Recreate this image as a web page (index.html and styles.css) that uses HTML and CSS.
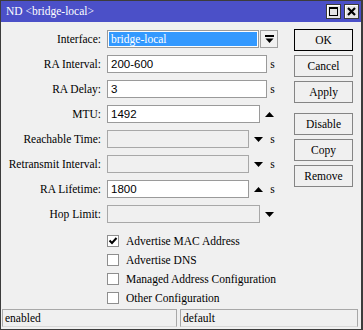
FILE: index.html
```html
<!DOCTYPE html>
<html>
<head>
<meta charset="utf-8">
<link rel="stylesheet" href="styles.css">
</head>
<body>
<div class="window">
  <div class="titlebar">
    <span class="title">ND &lt;bridge-local&gt;</span>
    <div class="tb-buttons">
      <span class="tbtn"><svg width="13" height="13" viewBox="0 0 13 13"><rect x="2.5" y="2.5" width="8" height="8" fill="none" stroke="#000" stroke-width="1"/><rect x="2" y="2" width="9" height="2" fill="#000"/></svg></span>
      <span class="tbtn"><svg width="13" height="13" viewBox="0 0 13 13"><path d="M3 3 L10 10 M10 3 L3 10" stroke="#000" stroke-width="2.2"/></svg></span>
    </div>
  </div>
  <div class="body">
    <div class="form">
      <div class="row">
        <label class="lbl">Interface:</label>
        <div class="ctrl">
          <div class="input sel"><span class="selected">bridge-local</span></div>
          <span class="ddbtn"><svg width="9" height="9" viewBox="0 0 9 9"><rect x="0" y="0" width="9" height="2" fill="#000"/><polygon points="0.5,3.5 8.5,3.5 4.5,8" fill="#000"/></svg></span>
        </div>
      </div>
      <div class="row">
        <label class="lbl">RA Interval:</label>
        <div class="ctrl">
          <div class="input"><span class="num">200-600</span></div>
          <span class="unit">s</span>
        </div>
      </div>
      <div class="row">
        <label class="lbl">RA Delay:</label>
        <div class="ctrl">
          <div class="input"><span class="num">3</span></div>
          <span class="unit">s</span>
        </div>
      </div>
      <div class="row">
        <label class="lbl">MTU:</label>
        <div class="ctrl">
          <div class="input"><span class="num">1492</span></div>
          <span class="arrow"><svg width="9" height="5" viewBox="0 0 9 5"><polygon points="0,5 9,5 4.5,0" fill="#000"/></svg></span>
        </div>
      </div>
      <div class="row">
        <label class="lbl">Reachable Time:</label>
        <div class="ctrl">
          <div class="input off"></div>
          <span class="arrow"><svg width="9" height="5" viewBox="0 0 9 5"><polygon points="0,0 9,0 4.5,5" fill="#000"/></svg></span>
          <span class="unit">s</span>
        </div>
      </div>
      <div class="row">
        <label class="lbl">Retransmit Interval:</label>
        <div class="ctrl">
          <div class="input off"></div>
          <span class="arrow"><svg width="9" height="5" viewBox="0 0 9 5"><polygon points="0,0 9,0 4.5,5" fill="#000"/></svg></span>
          <span class="unit">s</span>
        </div>
      </div>
      <div class="row">
        <label class="lbl">RA Lifetime:</label>
        <div class="ctrl">
          <div class="input"><span class="num">1800</span></div>
          <span class="arrow"><svg width="9" height="5" viewBox="0 0 9 5"><polygon points="0,5 9,5 4.5,0" fill="#000"/></svg></span>
          <span class="unit">s</span>
        </div>
      </div>
      <div class="row">
        <label class="lbl">Hop Limit:</label>
        <div class="ctrl">
          <div class="input off"></div>
          <span class="arrow"><svg width="9" height="5" viewBox="0 0 9 5"><polygon points="0,0 9,0 4.5,5" fill="#000"/></svg></span>
        </div>
      </div>
      <div class="checks">
        <div class="check"><span class="box"><svg width="10" height="10" viewBox="0 0 10 10"><polyline points="1.5,4.5 4,7 8.5,2" fill="none" stroke="#000" stroke-width="2"/></svg></span><span class="ctext">Advertise MAC Address</span></div>
        <div class="check"><span class="box"></span><span class="ctext">Advertise DNS</span></div>
        <div class="check"><span class="box"></span><span class="ctext">Managed Address Configuration</span></div>
        <div class="check"><span class="box"></span><span class="ctext">Other Configuration</span></div>
      </div>
    </div>
    <div class="buttons">
      <div class="btn default">OK</div>
      <div class="btn">Cancel</div>
      <div class="btn">Apply</div>
      <div class="btn group">Disable</div>
      <div class="btn">Copy</div>
      <div class="btn">Remove</div>
    </div>
  </div>
  <div class="status">
    <div class="sfield">enabled</div>
    <div class="sfield">default</div>
  </div>
</div>
</body>
</html>
```
FILE: styles.css
```css
* { box-sizing: border-box; }
html, body { margin: 0; padding: 0; background: #ffffff; }
body {
  font-family: "Liberation Serif", "Times New Roman", serif;
  font-size: 11.5px;
  color: #000;
}
.window {
  width: 363px;
  height: 330px;
  background: #f0f0f0;
  border-top: 1px solid #3c3c3c;
  border-left: 1px solid #3c3c3c;
  border-right: 2px solid #3c3c3c;
  border-bottom: 1px solid #3c3c3c;
  display: flex;
  flex-direction: column;
}
.titlebar {
  height: 21px;
  background: #4b50c8;
  display: flex;
  align-items: center;
  justify-content: space-between;
  padding: 0 2px 0 5px;
}
.title {
  color: #fff;
  font-size: 11.5px;
  line-height: 21px;
}
.tb-buttons { display: flex; gap: 3px; }
.tbtn {
  width: 15px;
  height: 15px;
  background: #e6e6e6;
  border: 1px solid #3a3a3a;
  box-shadow: inset 1px 1px 0 #ffffff;
  display: flex;
  align-items: center;
  justify-content: center;
}
.tbtn svg { display: block; }
.body {
  display: flex;
  padding-top: 7px;
}
.form {
  width: 277px;
  flex-shrink: 0;
  padding-top: 1px;
  display: flex;
  flex-direction: column;
  gap: 7px;
}
.row {
  display: flex;
  height: 18px;
  align-items: center;
}
.lbl {
  width: 100px;
  margin-right: 6px;
  text-align: right;
  white-space: nowrap;
}
.ctrl {
  width: 171px;
  height: 18px;
  display: flex;
  align-items: center;
}
.input {
  flex: 1;
  height: 18px;
  background: #fff;
  border: 1px solid #9a9a9a;
  padding-left: 3px;
  line-height: 16px;
  white-space: nowrap;
  overflow: hidden;
}
.input.off { background: #f0f0f0; border-color: #a8a8a8; }
.input.sel { padding: 1px; margin-right: 1px; }
.selected {
  display: block;
  height: 14px;
  background: #3399ff;
  color: #fff;
  line-height: 14px;
  padding-left: 2px;
}
.num {
  font-family: "Liberation Sans", Arial, sans-serif;
  font-size: 11.5px;
}
.ddbtn {
  width: 18px;
  height: 18px;
  border: 1px solid #a0a0a0;
  background: #f0f0f0;
  display: flex;
  align-items: center;
  justify-content: center;
}
.ddbtn svg, .arrow svg { display: block; }
.arrow {
  width: 18px;
  display: flex;
  justify-content: center;
  align-items: center;
}
.unit {
  width: 11px;
  text-align: center;
}
.checks {
  margin-top: 1px;
  padding-left: 106px;
  display: flex;
  flex-direction: column;
}
.check {
  height: 19px;
  display: flex;
  align-items: center;
  gap: 7px;
  white-space: nowrap;
}
.box {
  flex-shrink: 0;
  width: 12px;
  height: 12px;
  border: 1px solid #8e8e8e;
  background: #fff;
  display: flex;
  align-items: center;
  justify-content: center;
}
.ctext { flex-shrink: 0; }
.box svg { display: block; }
.buttons {
  margin-left: 16px;
  width: 59px;
  flex-shrink: 0;
  display: flex;
  flex-direction: column;
  gap: 4px;
}
.btn {
  height: 22px;
  border: 1px solid #858585;
  background: #f0f0f0;
  text-align: center;
  line-height: 20px;
}
.btn.default { border-color: #000; }
.btn.group { margin-top: 6px; }
.status {
  margin-top: auto;
  display: grid;
  grid-template-columns: 175px 1fr;
  gap: 3px;
  padding: 0 3px 2px 1px;
}
.sfield {
  height: 18px;
  border: 1px solid #a8a8a8;
  border-bottom-color: #d8d8d8;
  padding-left: 2px;
  line-height: 16px;
}
```
